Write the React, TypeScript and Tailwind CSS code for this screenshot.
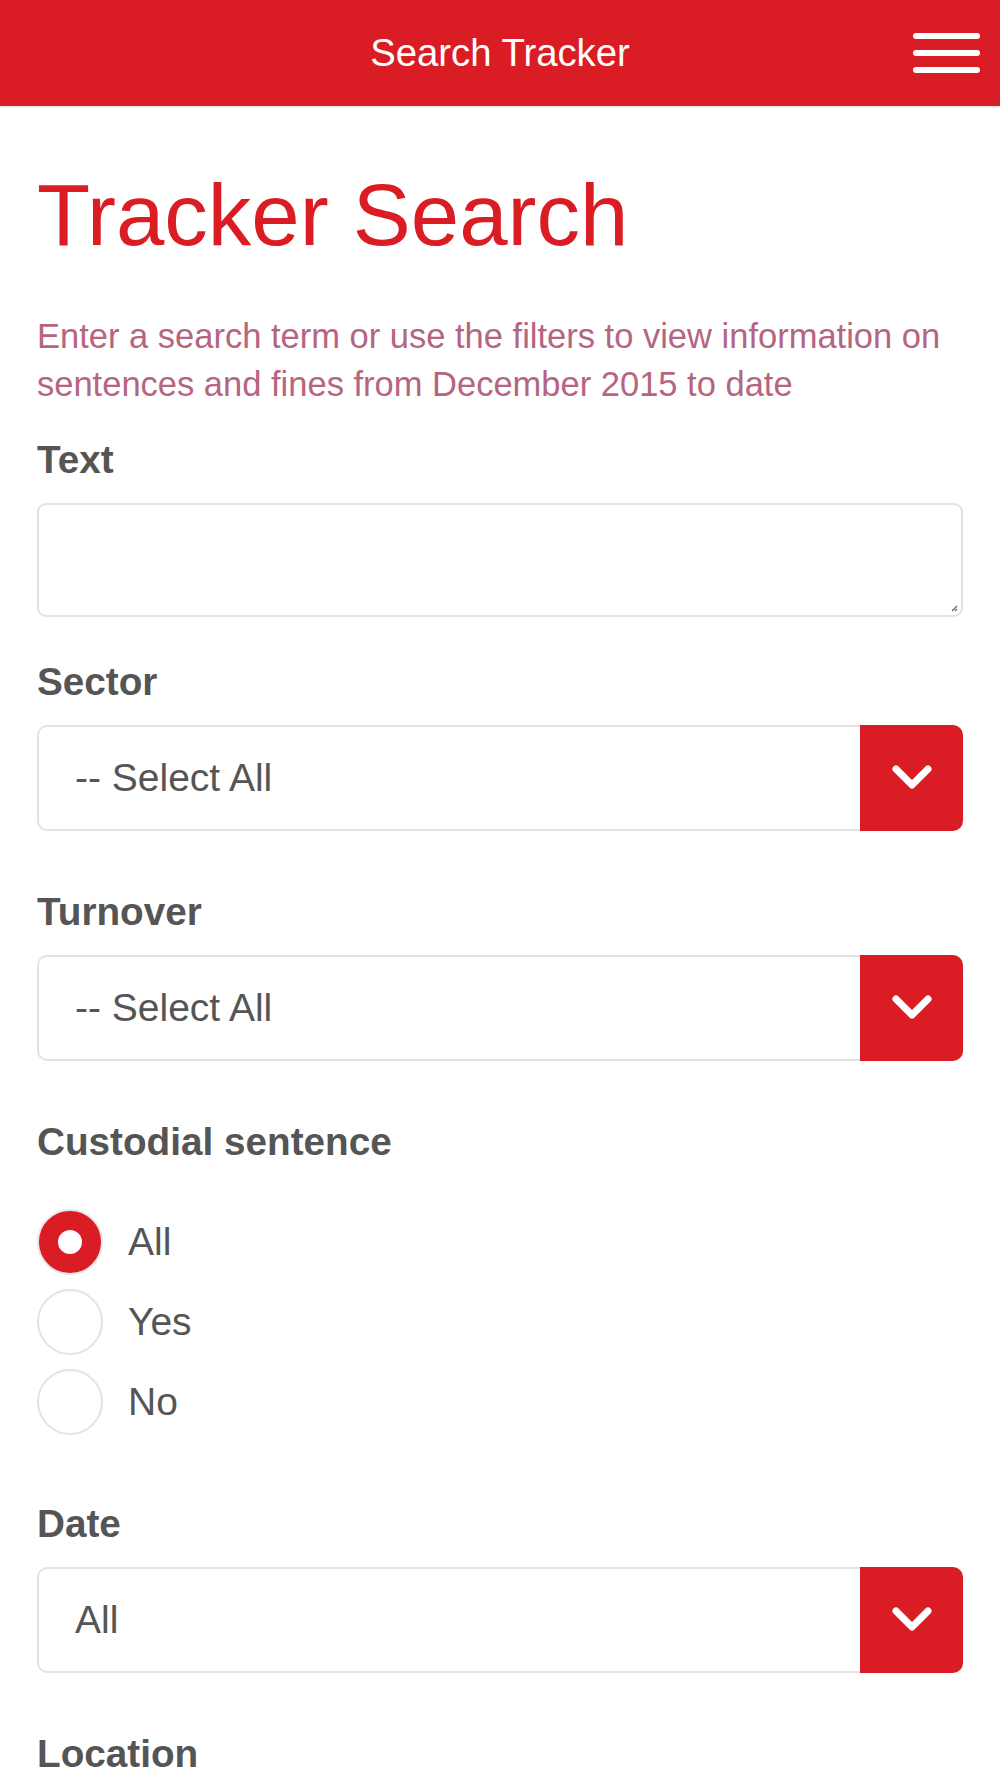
import React from "react";

const Chevron = () => (
  <svg width="42" height="28" viewBox="0 0 42 28" fill="none">
    <path d="M5 5 L21 21 L37 5" stroke="white" strokeWidth="7" strokeLinecap="round" strokeLinejoin="round" />
  </svg>
);

const Label = ({ children, className = "" }: { children: React.ReactNode; className?: string }) => (
  <div className={`text-[38.7px] leading-[44px] font-bold text-[#555555] ${className}`}>{children}</div>
);

const Select = ({ value, className = "" }: { value: string; className?: string }) => (
  <div className={`flex h-[106px] w-full ${className}`}>
    <div className="flex flex-1 items-center rounded-l-[10px] border-2 border-r-0 border-[#e3e3e3] bg-white pl-[36px] text-[39px] text-[#555555]">
      {value}
    </div>
    <div className="flex w-[103px] items-center justify-center rounded-r-[10px] bg-[#da1c24]">
      <Chevron />
    </div>
  </div>
);

const Radio = ({ label, checked }: { label: string; checked?: boolean }) => (
  <div className="flex h-[66px] items-center">
    {checked ? (
      <div className="flex h-[66px] w-[66px] items-center justify-center rounded-full border-2 border-[#e6e6e6] bg-[#da1c24]">
        <div className="h-[24px] w-[24px] rounded-full bg-white" />
      </div>
    ) : (
      <div className="h-[66px] w-[66px] rounded-full border-2 border-[#e3e3e3] bg-white" />
    )}
    <span className="ml-[25px] text-[39px] leading-[44px] text-[#555555]">{label}</span>
  </div>
);

export default function App() {
  return (
    <div className="min-h-[1778px] bg-white" style={{ fontFamily: '"Liberation Sans", Arial, sans-serif' }}>
      <header className="relative flex h-[106px] items-center justify-center bg-[#da1c24] shadow-[0_1px_1px_rgba(0,0,0,0.12)]">
        <span className="text-[38.3px] leading-none text-white">Search Tracker</span>
        <div className="absolute right-[20px] top-[33px] flex w-[67px] flex-col gap-[11px]">
          <div className="h-[6px] rounded-full bg-white" />
          <div className="h-[6px] rounded-full bg-white" />
          <div className="h-[6px] rounded-full bg-white" />
        </div>
      </header>
      <main className="px-[37px]">
        <h1 className="mt-[66px] text-[87px] leading-[86px] font-normal text-[#da1c24]">Tracker Search</h1>
        <p className="mt-[54px] text-[34.5px] leading-[48px] text-[#b5657f]">
          Enter a search term or use the filters to view information on sentences and fines from December 2015 to date
        </p>
        <Label className="mt-[30px]">Text</Label>
        <div className="relative mt-[21px] h-[114px] w-full rounded-[9px] border-2 border-[#e3e3e3] bg-white">
          <svg className="absolute bottom-[3px] right-[3px]" width="8" height="8" viewBox="0 0 8 8">
            <path d="M7 2 L2 7 M7 5 L5 7" stroke="#666" strokeWidth="1.3" />
          </svg>
        </div>
        <Label className="mt-[43px]">Sector</Label>
        <Select value="-- Select All" className="mt-[21px]" />
        <Label className="mt-[59px]">Turnover</Label>
        <Select value="-- Select All" className="mt-[21px]" />
        <Label className="mt-[59px]">Custodial sentence</Label>
        <div className="mt-[45px] flex flex-col gap-[14px]">
          <Radio label="All" checked />
          <Radio label="Yes" />
          <Radio label="No" />
        </div>
        <Label className="mt-[67px]">Date</Label>
        <Select value="All" className="mt-[21px]" />
        <Label className="mt-[59px]">Location</Label>
      </main>
    </div>
  );
}
